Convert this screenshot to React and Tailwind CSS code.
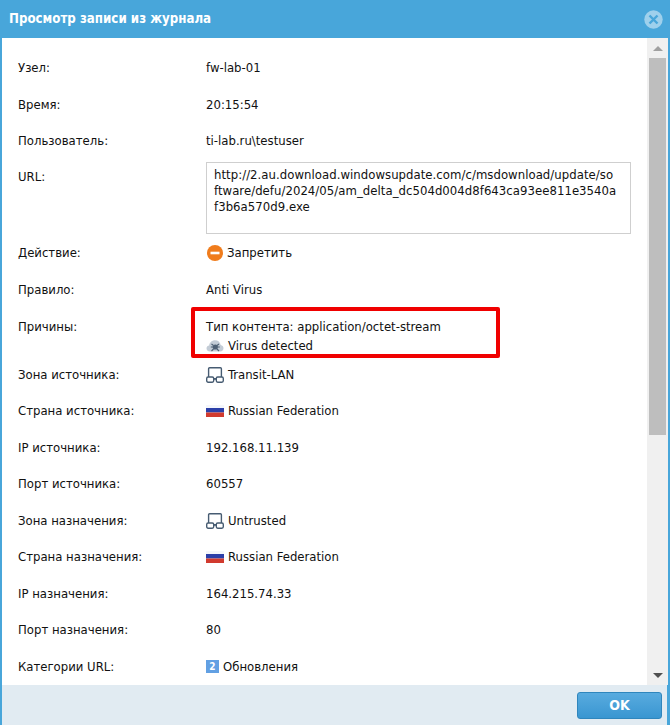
const FONT = "[font-family:'DejaVu_Sans',sans-serif] [font-stretch:condensed]";

function Row({ label, children }) {
  return (
    <div className="flex items-center h-[36.5px]">
      <div className="w-[204px] shrink-0 pl-[16px]">{label}</div>
      <div className="flex items-center gap-[4px]">{children}</div>
    </div>
  );
}

function Zone() {
  return (
    <svg width="18" height="16" viewBox="0 0 18 16" fill="none">
      <rect x="2.6" y="0.7" width="12.8" height="11" rx="1" fill="#fff" stroke="#475c72" strokeWidth="1.4" />
      <rect x="0.7" y="10" width="7" height="5.2" rx="1.4" fill="#fff" stroke="#475c72" strokeWidth="1.4" />
      <rect x="10.3" y="10" width="7" height="5.2" rx="1.4" fill="#fff" stroke="#475c72" strokeWidth="1.4" />
      <path d="M7.7 12h2.6" stroke="#475c72" strokeWidth="1.2" />
    </svg>
  );
}

function Flag() {
  return (
    <svg width="18" height="12" viewBox="0 0 18 12">
      <rect y="0" width="18" height="3" fill="#f4f6fb" />
      <rect y="3" width="18" height="4.5" fill="#2b3fa8" />
      <rect y="7.5" width="18" height="4.5" fill="#d13a2e" />
    </svg>
  );
}

function Cloud() {
  return (
    <svg width="18" height="14" viewBox="0 0 18 14">
      <path d="M4 12.5C1.6 12.5 0.5 11 0.5 9.3 0.5 7.6 1.8 6.5 3.2 6.4 3.6 3.4 6 1.2 9 1.2c3 0 5.3 2 5.7 4.9 1.6.3 2.8 1.6 2.8 3.2 0 1.8-1.3 3.2-3.2 3.2H4z" fill="#c3ccd6" />
      <circle cx="9.3" cy="8" r="2.6" fill="#4d5f73" />
      <path d="M5.5 5l2 1.5M13 5l-2 1.5M4.8 8h2.4M11.4 8h2.4M5.5 12l2-2M13 12l-2-2" stroke="#4d5f73" strokeWidth="1.1" />
    </svg>
  );
}

export default function App() {
  return (
    <div className={`relative w-[670px] h-[725px] flex flex-col bg-[#48a6da] text-[13px] text-[#111] overflow-hidden ${FONT}`}>
      <div className="h-[38px] shrink-0 flex items-center justify-between pl-[9px] pr-[7px] text-white font-bold text-[13.2px]">
        <span>Просмотр записи из журнала</span>
        <svg width="19" height="19" viewBox="0 0 19 19">
          <circle cx="9.5" cy="9.5" r="9.2" fill="#9ed0ec" />
          <path d="M5.5 5.5l8 8M13.5 5.5l-8 8" stroke="#48a6da" strokeWidth="2.4" />
        </svg>
      </div>
      <div className="flex-1 mx-[2px] flex min-h-0 bg-white">
        <div className="flex-1 pt-[11.75px] overflow-hidden">
          <Row label="Узел:">fw-lab-01</Row>
          <Row label="Время:">20:15:54</Row>
          <Row label="Пользователь:">ti-lab.ru\testuser</Row>
          <div className="flex h-[75.5px]">
            <div className="w-[204px] shrink-0 pl-[16px] pt-[9px] leading-[18px]">URL:</div>
            <div className="w-[425px] h-[72px] mt-[3px] border border-[#cfcfcf] pl-[7px] pt-[4px] leading-[16px] whitespace-nowrap tracking-[0.04px]">
              http://2.au.download.windowsupdate.com/c/msdownload/update/so<br />
              ftware/defu/2024/05/am_delta_dc504d004d8f643ca93ee811e3540a<br />
              f3b6a570d9.exe
            </div>
          </div>
          <Row label="Действие:">
            <svg width="16" height="16" viewBox="0 0 16 16" className="ml-[1px]">
              <circle cx="8" cy="8" r="8" fill="#f07c1c" />
              <rect x="3.5" y="6.7" width="9" height="2.6" fill="#fff" />
            </svg>
            <span>Запретить</span>
          </Row>
          <Row label="Правило:">Anti Virus</Row>
          <div className="flex h-[48.5px]">
            <div className="w-[204px] shrink-0 pl-[16px] pt-[9.75px] leading-[18px]">Причины:</div>
            <div className="pt-[9.75px] leading-[18px]">
              <div>Тип контента: application/octet-stream</div>
              <div className="flex items-center gap-[4px] h-[20px]"><Cloud /><span>Virus detected</span></div>
            </div>
          </div>
          <Row label="Зона источника:"><Zone /><span>Transit-LAN</span></Row>
          <Row label="Страна источника:"><Flag /><span>Russian Federation</span></Row>
          <Row label="IP источника:">192.168.11.139</Row>
          <Row label="Порт источника:">60557</Row>
          <Row label="Зона назначения:"><Zone /><span>Untrusted</span></Row>
          <Row label="Страна назначения:"><Flag /><span>Russian Federation</span></Row>
          <Row label="IP назначения:">164.215.74.33</Row>
          <Row label="Порт назначения:">80</Row>
          <Row label="Категории URL:">
            <span className="w-[13px] h-[13px] bg-[#62a0e3] text-white text-[10px] font-bold flex items-center justify-center">2</span>
            <span>Обновления</span>
          </Row>
        </div>
        <div className="w-[21px] shrink-0 bg-[#f0f0f0] flex flex-col items-center">
          <div className="h-[20px] shrink-0 flex items-center justify-center">
            <div className="w-0 h-0 border-l-[5px] border-r-[5px] border-b-[5px] border-l-transparent border-r-transparent border-b-[#a0a0a0]" />
          </div>
          <div className="w-[17px] h-[377px] bg-[#bebebe]" />
          <div className="mt-auto h-[20px] shrink-0 flex items-center justify-center">
            <div className="w-0 h-0 border-l-[5px] border-r-[5px] border-t-[5px] border-l-transparent border-r-transparent border-t-[#505050]" />
          </div>
        </div>
      </div>
      <div className="h-[40px] shrink-0 ml-[2px] mr-[3px] bg-[#e1ebf2] flex items-start justify-end pt-[7px] pr-[5px]">
        <button className="w-[85px] h-[27px] rounded-[3px] border border-[#2f86bd] bg-gradient-to-b from-[#58abdf] to-[#3996d1] text-white font-bold text-[14px]">OK</button>
      </div>
      <div className="absolute left-[191px] top-[307px] w-[309px] h-[51px] border-[4px] border-[#f00000] rounded-[2px]" />
    </div>
  );
}
